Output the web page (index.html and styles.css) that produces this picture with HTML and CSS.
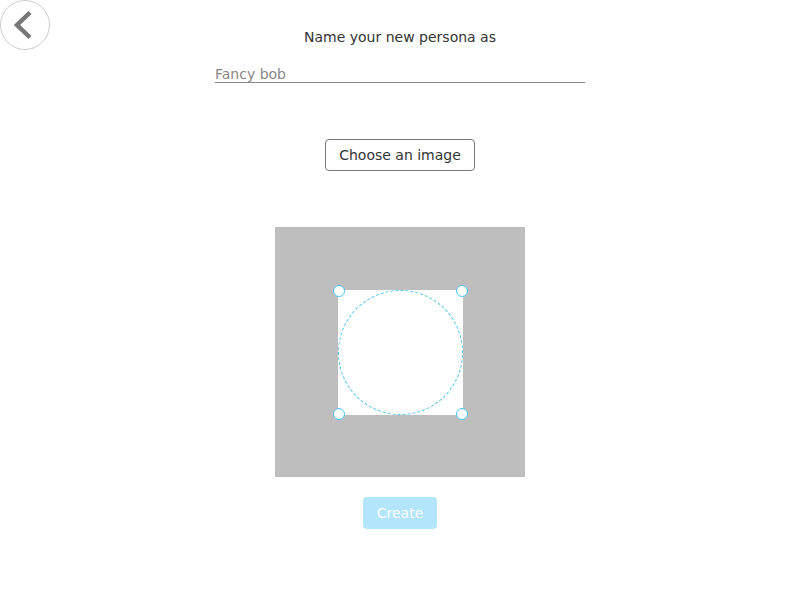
FILE: index.html
```html
<!DOCTYPE html>
<html>
<head>
<meta charset="utf-8">
<link rel="stylesheet" href="styles.css">
</head>
<body>
<button class="back" aria-label="Back">
  <svg width="50" height="50" viewBox="0 0 50 50"><path d="M30 12.5 L17 25 L30 37.5" fill="none" stroke="#777" stroke-width="4.5"/></svg>
</button>
<main class="page">
  <div class="title">Name your new persona as</div>
  <input class="name" type="text" placeholder="Fancy bob">
  <button class="choose">Choose an image</button>
  <div class="crop">
    <div class="area">
      <div class="circle"></div>
      <span class="h tl"></span><span class="h tr"></span><span class="h bl"></span><span class="h br"></span>
    </div>
  </div>
  <button class="create">Create</button>
</main>
</body>
</html>
```
FILE: styles.css
```css
html, body { margin: 0; padding: 0; background: #fff; }
body { font-family: "DejaVu Sans", sans-serif; font-size: 14px; color: #333; }
.back {
  position: absolute; left: 0; top: 0;
  width: 50px; height: 50px; border-radius: 50%;
  border: 1px solid #ccc; background: #fff; padding: 0;
  box-sizing: border-box; overflow: hidden;
}
.back svg { position: absolute; left: -1px; top: -1px; }
.page { display: flex; flex-direction: column; align-items: center; padding-top: 29px; }
.title { line-height: 17px; height: 17px; color: #333; }
.name {
  margin-top: 17px; width: 370px; box-sizing: border-box;
  border: none; border-bottom: 1px solid #888; outline: none;
  font-family: "DejaVu Sans", sans-serif; font-size: 14px; padding: 2px 0 0 0; height: 20px;
  line-height: 17px; color: #333; background: transparent;
}
.name::placeholder { color: #888; }
.choose {
  margin-top: 56px; width: 150px; height: 32px; box-sizing: border-box;
  border: 1px solid #777; border-radius: 4px; background: #fff;
  font-family: "DejaVu Sans", sans-serif; font-size: 14px; color: #333; padding: 0;
}
.crop {
  margin-top: 56px; width: 250px; height: 250px; background: #bebebe;
  display: flex; align-items: center; justify-content: center;
}
.area { position: relative; width: 125px; height: 125px; background: #fff; }
.circle {
  position: absolute; inset: 0; border-radius: 50%;
  border: 1px dashed #4fc3f7; box-sizing: border-box;
}
.h {
  position: absolute; width: 12px; height: 12px; border-radius: 50%;
  background: #fff; border: 1px solid #4fc3f7; box-sizing: border-box;
}
.tl { left: -5px; top: -5px; }
.tr { right: -5px; top: -5px; }
.bl { left: -5px; bottom: -5px; }
.br { right: -5px; bottom: -5px; }
.create {
  margin-top: 20px; width: 74px; height: 32px; border: none; border-radius: 4px;
  background: #b3e5fc; color: #fff; font-family: "DejaVu Sans", sans-serif; font-size: 14px; padding: 0;
}
```
